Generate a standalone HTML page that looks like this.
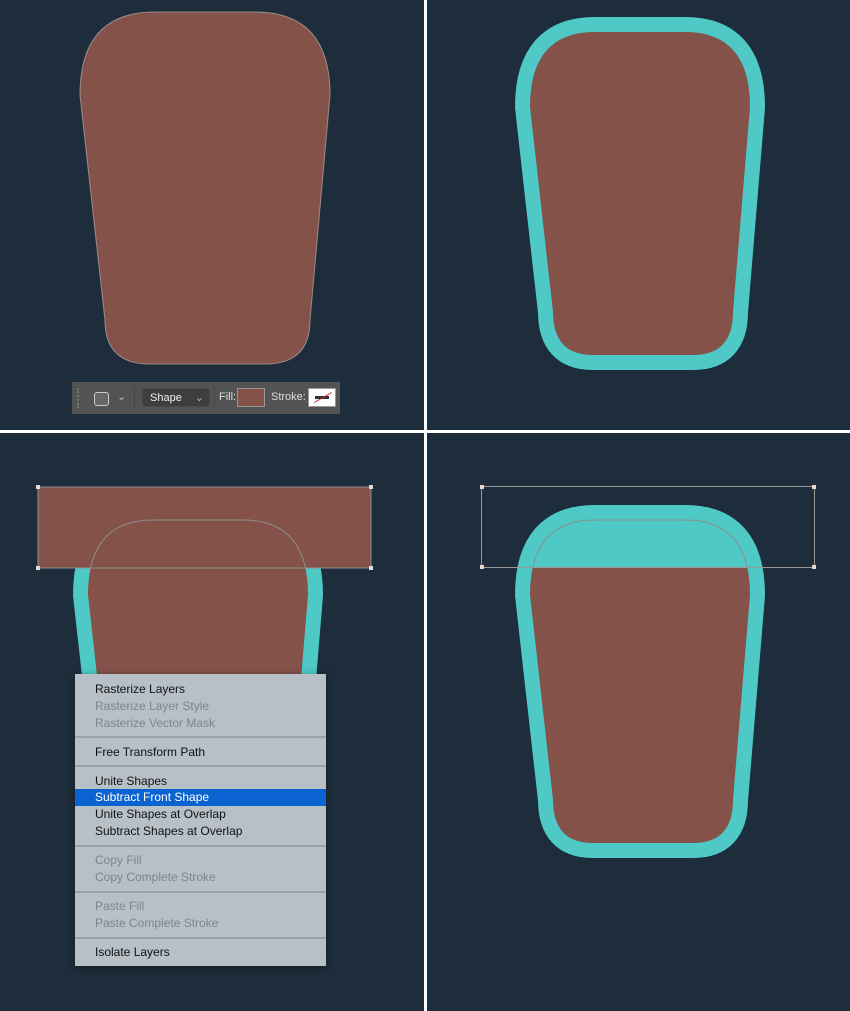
<!DOCTYPE html>
<html><head><meta charset="utf-8"><style>
body{margin:0;width:850px;height:1011px;background:#1e2d3c;overflow:hidden;position:relative;font-family:"Liberation Sans",sans-serif}
svg{position:absolute;left:0;top:0}
.menu{position:absolute;left:75px;top:674px;width:251px;height:292px;background:#b7bfc7;box-shadow:0 2px 8px rgba(0,0,0,.4);font-size:12px;color:#111}
.menu div.i{position:absolute;left:20px;height:17px;line-height:17px;white-space:nowrap}
.menu .d{color:#7d858d}
.menu .s{position:absolute;left:0;width:251px;height:2px;background:#9aa2aa}
.tb{position:absolute;left:72px;top:382px;width:268px;height:32px;background:#535353;font-size:11px;color:#ddd}
</style></head><body>
<svg width="850" height="1011" viewBox="0 0 850 1011">
<defs>
<path id="inner" d="M65,0 L155,0 Q220,0 220,75 L203,280 Q203,323 163,323 L63,323 Q23,323 23,280 L0,75 Q0,0 65,0Z"/>
<clipPath id="below"><rect x="0" y="567" width="850" height="444"/></clipPath>
<clipPath id="above"><rect x="0" y="0" width="850" height="567"/></clipPath>
<clipPath id="t3"><rect x="0" y="487" width="850" height="81"/></clipPath>
</defs>
<rect x="424" y="0" width="3" height="1011" fill="#fff"/>
<rect x="0" y="430" width="850" height="3" fill="#fff"/>
<!-- panel1 -->
<path d="M155,12 L255,12 Q330,12 330,95 L310,320 Q310,364 265,364 L150,364 Q105,364 105,320 L80,95 Q80,12 155,12 Z" fill="#85524a" stroke="#9a8a88" stroke-width="1"/>
<!-- panel2 -->
<use href="#inner" transform="translate(530,32)" fill="#4ec9c5" stroke="#4ec9c5" stroke-width="30" stroke-linejoin="round"/>
<use href="#inner" transform="translate(530,32)" fill="#85524a"/>
<!-- panel3 -->
<use href="#inner" transform="translate(88,520)" fill="#4ec9c5" stroke="#4ec9c5" stroke-width="30" stroke-linejoin="round"/>
<use href="#inner" transform="translate(88,520)" fill="#85524a"/>
<rect x="38" y="487" width="333" height="81" fill="#85524a" stroke="#8d8d8d" stroke-width="1"/>
<g clip-path="url(#t3)"><use href="#inner" transform="translate(88,520)" fill="none" stroke="#8d8d8d" stroke-width="1"/></g>
<g fill="#ddd"><rect x="36" y="485" width="4" height="4"/><rect x="369" y="485" width="4" height="4"/><rect x="36" y="566" width="4" height="4"/><rect x="369" y="566" width="4" height="4"/></g>
<!-- panel4 -->
<use href="#inner" transform="translate(530,520)" fill="#4ec9c5" stroke="#4ec9c5" stroke-width="30" stroke-linejoin="round"/>
<g clip-path="url(#below)"><use href="#inner" transform="translate(530,520)" fill="#85524a"/></g>
<g clip-path="url(#above)"><use href="#inner" transform="translate(530,520)" fill="none" stroke="#8d8d8d" stroke-width="1"/></g>
<rect x="481.5" y="486.5" width="333" height="81" fill="none" stroke="#9a9a9a" stroke-width="1"/>
<g fill="#e8d8cc"><rect x="480" y="485" width="4" height="4"/><rect x="812" y="485" width="4" height="4"/><rect x="480" y="565" width="4" height="4"/><rect x="812" y="565" width="4" height="4"/></g>
</svg>
<div class="tb">
<div style="position:absolute;left:5px;top:6px;width:2px;height:20px;border-left:2px dotted #777"></div>
<div style="position:absolute;left:22px;top:10px;width:13px;height:12px;border:1px solid #ccc;border-radius:3px;background:#666"></div>
<div style="position:absolute;left:45px;top:8px;color:#bbb">⌄</div>
<div style="position:absolute;left:62px;top:4px;width:1px;height:24px;background:#444"></div>
<div style="position:absolute;left:70px;top:6px;width:68px;height:19px;background:#3e3e3e;border:1px solid #4a4a4a;border-radius:3px;color:#eee;line-height:19px;padding-left:7px;box-sizing:border-box;font-size:11px">Shape<span style="position:absolute;right:5px;color:#bbb">⌄</span></div>
<div style="position:absolute;left:142px;top:4px;width:1px;height:24px;background:#444"></div>
<div style="position:absolute;left:147px;top:9px">Fill:</div>
<div style="position:absolute;left:165px;top:6px;width:28px;height:19px;border:1px solid #999;background:#85524a;box-sizing:border-box"></div>
<div style="position:absolute;left:199px;top:9px">Stroke:</div>
<div style="position:absolute;left:236px;top:6px;width:28px;height:19px;border:1px solid #999;background:#fff;box-sizing:border-box"><div style="position:absolute;left:6px;top:7px;width:14px;height:3px;background:#333"></div><div style="position:absolute;left:4px;top:8px;width:20px;height:1px;background:#d22;transform:rotate(-30deg)"></div></div>
</div>
<div class="menu">
<div class="i" style="top:7px">Rasterize Layers</div>
<div class="i d" style="top:24px">Rasterize Layer Style</div>
<div class="i d" style="top:41px">Rasterize Vector Mask</div>
<div class="s" style="top:62px"></div>
<div class="i" style="top:70px">Free Transform Path</div>
<div class="s" style="top:91px"></div>
<div class="i" style="top:99px">Unite Shapes</div>
<div style="position:absolute;left:0;top:115px;width:251px;height:17px;background:#0a63d1"></div>
<div class="i" style="top:115px;color:#fff">Subtract Front Shape</div>
<div class="i" style="top:132px">Unite Shapes at Overlap</div>
<div class="i" style="top:149px">Subtract Shapes at Overlap</div>
<div class="s" style="top:171px"></div>
<div class="i d" style="top:178px">Copy Fill</div>
<div class="i d" style="top:195px">Copy Complete Stroke</div>
<div class="s" style="top:217px"></div>
<div class="i d" style="top:224px">Paste Fill</div>
<div class="i d" style="top:241px">Paste Complete Stroke</div>
<div class="s" style="top:263px"></div>
<div class="i" style="top:270px">Isolate Layers</div>
</div>
</body></html>
